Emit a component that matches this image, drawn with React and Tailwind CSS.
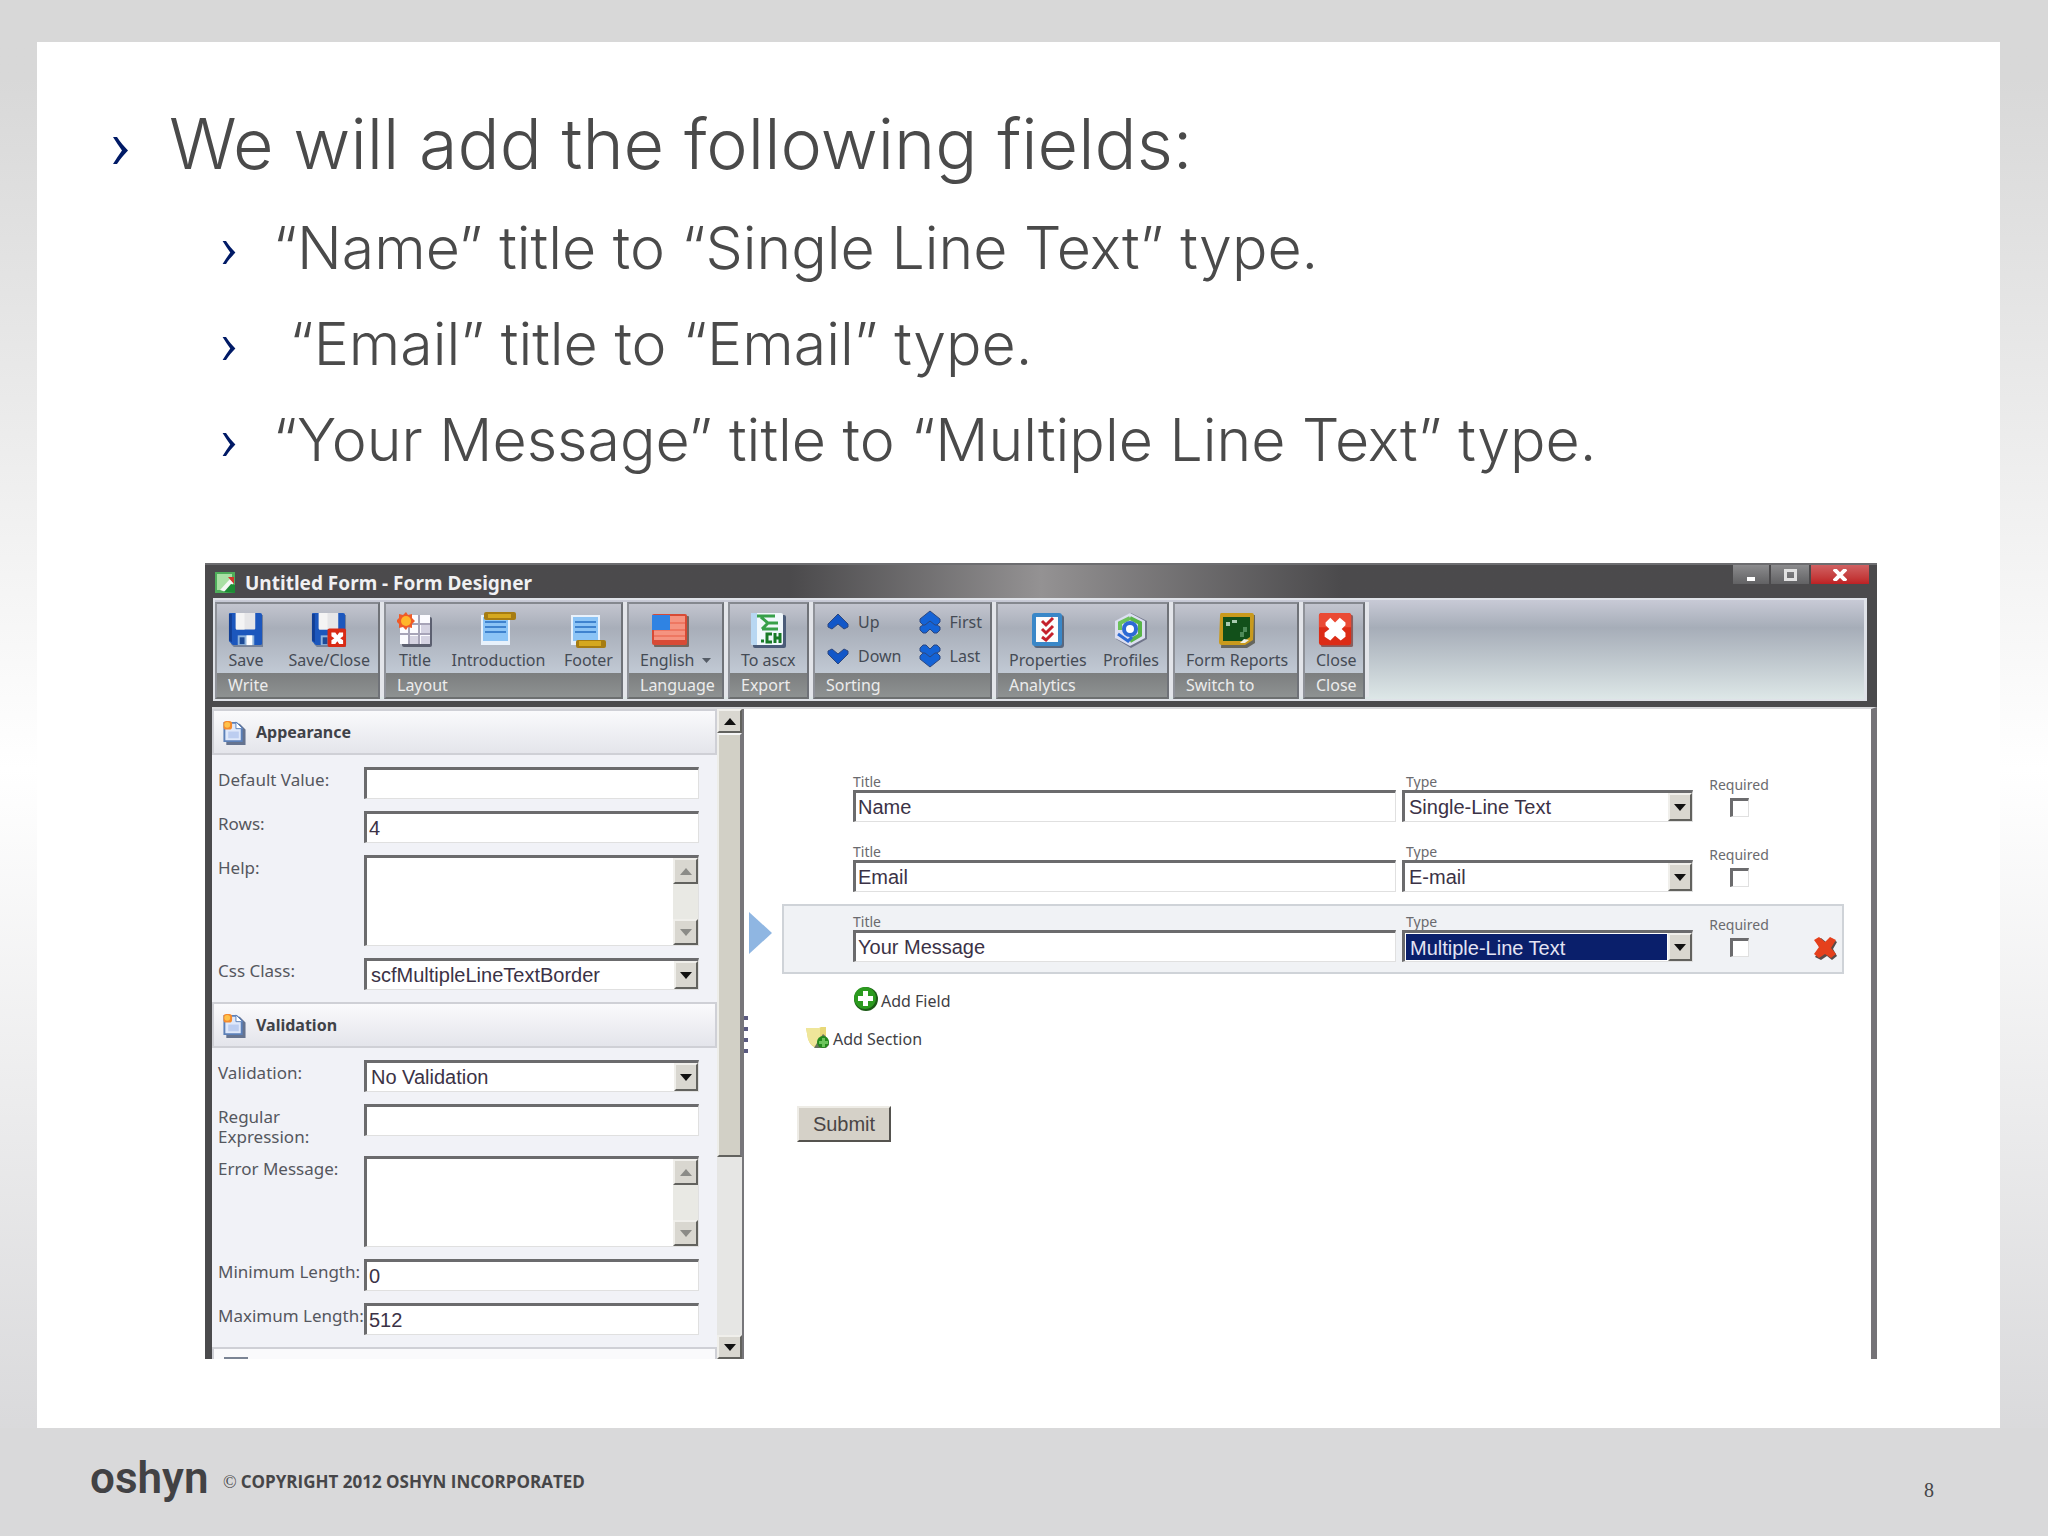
import React from "react";

const bullets = [
  "“Name” title to “Single Line Text” type.",
  "\u00a0“Email” title to “Email” type.",
  "“Your Message” title to “Multiple Line Text” type.",
];

function Chevron({ className }) {
  return (
    <svg viewBox="0 0 17 27" className={className} aria-hidden="true">
      <path d="M1 0 L5 0 C8 5 12 9 16 13.5 C12 18 8 22 5 27 L1 27 C4 22 7 18 10 13.5 C7 9 4 5 1 0Z" fill="#001a66" />
    </svg>
  );
}

function Floppy({ closing }) {
  return (
    <svg viewBox="0 0 37 37" className="h-9 w-9" aria-hidden="true">
      <path d="M3 3h33v33H6l-3-3z" fill="#5d6b86" opacity=".7" />
      <path d="M1 2q0-1 1-1h31q2 0 2 2v29q0 2-2 2H5l-4-4z" fill="#1c57bd" />
      <path d="M1 2h3v29l-3-2z" fill="#123f95" />
      <path d="M8 1h20v16q0 1-1 1H9q-1 0-1-1z" fill="#e6e6e8" />
      <path d="M8 1h9v17H9q-1 0-1-1z" fill="#f4f4f4" />
      <path d="M10 24h17v10H10z" fill="#8fb4dd" />
      <path d="M19 24h6v10h-6z" fill="#fff" />
      <path d="M12 26h5v7h-5z" fill="#1c4a96" />
      {closing && (
        <g>
          <rect x="17" y="17" width="19" height="19" rx="2" fill="#d92a14" />
          <path d="M21 21h4l2 3 2-3h4v4l-3 2 3 2v4h-4l-2-3-2 3h-4v-4l3-2-3-2z" fill="#fff" />
        </g>
      )}
    </svg>
  );
}

function TitleIcon() {
  return (
    <svg viewBox="0 0 36 36" className="h-9 w-9" aria-hidden="true">
      <rect x="5" y="5" width="30" height="30" rx="2" fill="#5c6070" />
      <rect x="3" y="3" width="30" height="29" fill="#fbfbff" />
      <path d="M12 3v29M22 3v29M3 12h30M3 22h30" stroke="#a7a4b8" strokeWidth="2" />
      <path d="M24 24h9v8h-9zM13 24h8v8h-8zM24 13h9v8h-9z" fill="#d5d3e2" />
      <path d="M9 0l2 3 4-1 0 4 3 3-3 3 0 4-4-1-2 3-3-3-4 1 0-4-3-3 3-3 0-4 4 1z" fill="#ef5a28" />
      <circle cx="9" cy="9" r="5" fill="#ffb52a" />
    </svg>
  );
}

function PageIcon({ footer }) {
  return (
    <svg viewBox="0 0 36 36" className="h-9 w-9" aria-hidden="true">
      <rect x="1" y="3" width="29" height="30" fill="#e8f1fb" />
      <rect x="3" y="5" width="25" height="24" fill="#8cc4f6" />
      <path d="M5 10h21M5 15h21M5 20h21" stroke="#3f83cf" strokeWidth="2" />
      {footer ? (
        <g>
          <rect x="6" y="28" width="30" height="8" rx="2" fill="#a67c12" />
          <rect x="9" y="29" width="22" height="5" fill="#d5a81f" />
        </g>
      ) : (
        <g>
          <rect x="4" y="0" width="32" height="8" rx="2" fill="#a67c12" />
          <rect x="8" y="2" width="23" height="4" fill="#d5a81f" />
        </g>
      )}
    </svg>
  );
}

function FlagIcon() {
  return (
    <svg viewBox="0 0 38 36" className="h-9 w-[38px]" aria-hidden="true">
      <rect x="3" y="4" width="35" height="31" rx="1" fill="#73675f" />
      <rect x="1" y="2" width="35" height="31" rx="2" fill="#d84a35" />
      <rect x="3" y="4" width="31" height="24" fill="#f59380" />
      <path d="M3 11h31M3 18h31M3 24h31" stroke="#ee7762" strokeWidth="2" />
      <rect x="1" y="3" width="18" height="15" fill="#2f83e3" />
    </svg>
  );
}

function AscxIcon() {
  return (
    <svg viewBox="0 0 36 36" className="h-9 w-9" aria-hidden="true">
      <rect x="3" y="3" width="33" height="33" rx="2" fill="#4a5b78" />
      <rect x="1" y="1" width="32" height="32" rx="2" fill="#f0f8fc" />
      <path d="M1 1h6v32H3q-2 0-2-2z" fill="#b8d7f2" />
      <path d="M7 4h18M11 5l7 6-6 6M18 11h10M12 17h16" stroke="#37a04a" strokeWidth="3" fill="none" />
      <path d="M11 29h3M22 22h-5v8h5M25 21v10M30 21v10M25 26h5" stroke="#177a26" strokeWidth="3" fill="none" />
    </svg>
  );
}

function SortArrow({ flip, twice }) {
  return (
    <svg viewBox="0 0 24 24" className={flip ? "h-6 w-6 rotate-180" : "h-6 w-6"} aria-hidden="true">
      {twice ? (
        <g fill="#1463d6" stroke="#2d477e" strokeWidth="1">
          <path d="M12 10l10 7v3l-3 3h-3l-4-4-4 4H5l-3-3v-3z" />
          <path d="M12 1l10 8v3l-3 3h-2l-5-4-5 4H5l-3-3V9z" />
        </g>
      ) : (
        <path d="M12 4l10 10v3l-4 2-6-5-6 5-4-2v-3z" fill="#1257c8" stroke="#2d477e" strokeWidth="1" />
      )}
    </svg>
  );
}

function PropertiesIcon() {
  return (
    <svg viewBox="0 0 34 36" className="h-9 w-[34px]" aria-hidden="true">
      <rect x="3" y="3" width="30" height="33" rx="3" fill="#58677e" />
      <rect x="1" y="1" width="30" height="33" rx="3" fill="#3987c8" />
      <rect x="5" y="5" width="22" height="25" fill="#fcfcfc" />
      <path d="M11 9l4 4 7-7M11 17l4 4 7-7M11 25l4 3 7-7" stroke="#c4202b" strokeWidth="3" fill="none" />
    </svg>
  );
}

function ProfilesIcon() {
  return (
    <svg viewBox="0 0 36 36" className="h-9 w-9" aria-hidden="true">
      <path d="M18 1l16 8v18l-16 9-15-9V9z" fill="#70758a" />
      <path d="M17 1l15 8v17l-15 8-15-8V9z" fill="#dcdff1" />
      <path d="M17 6l10 5v12l-10 6" stroke="#58b548" strokeWidth="4" fill="none" />
      <path d="M17 6L7 11v7" stroke="#6cc25a" strokeWidth="4" fill="none" />
      <path d="M5 22l10 7 4-4" stroke="#2d6ad4" strokeWidth="3" fill="none" />
      <circle cx="17" cy="17" r="6" fill="#fff" stroke="#2d6ad4" strokeWidth="4" />
    </svg>
  );
}

function ReportsIcon() {
  return (
    <svg viewBox="0 0 38 36" className="h-9 w-[38px]" aria-hidden="true">
      <path d="M5 3h32v28l-8 5H3z" fill="#66665e" />
      <path d="M3 1h31q2 0 2 3l-1 24-8 5H4q-3 0-3-3L2 4q0-3 1-3z" fill="#c99a1c" />
      <path d="M5 5h27v20l-6 4H5z" fill="#12501a" />
      <path d="M8 10h4v4H8zM14 8h5v3h-5z" fill="#a9cbb0" />
      <path d="M25 15h4v5h-3v5h-4v-5h3z" fill="#4d8a58" />
      <path d="M22 31l4-4 5 1-4 3z" fill="#f0efe3" />
    </svg>
  );
}

function CloseIcon() {
  return (
    <svg viewBox="0 0 38 38" className="h-9 w-9" aria-hidden="true">
      <rect x="3" y="3" width="34" height="34" rx="2" fill="#875f60" />
      <rect x="1" y="1" width="34" height="34" rx="3" fill="#dc2b16" />
      <path d="M1 4q0-3 3-3h28q3 0 3 3v12H1z" fill="#ea4a34" />
      <path d="M8 11l5-5 5 5 5-5 6 5v3l-4 4 4 4v4l-5 4-6-5-5 5-6-4v-4l5-4-4-4z" fill="#fff" />
    </svg>
  );
}

function SectionIcon() {
  return (
    <svg viewBox="0 0 24 26" className="h-[25px] w-6" aria-hidden="true">
      <path d="M4 4h14l6 6v16H4z" fill="#65738f" />
      <path d="M1 2h14l6 6v15H1z" fill="#5c80b8" />
      <path d="M3 4h11l5 5v12H3z" fill="#dfe8fa" />
      <path d="M14 2v7h7z" fill="#fff" stroke="#5c80b8" />
      <path d="M6 12h11v7H6z" fill="#bccdf0" />
      <rect x="1" y="1" width="9" height="9" rx="3" fill="#f58a2c" />
      <circle cx="5" cy="5" r="3" fill="#ffc14a" />
    </svg>
  );
}

function Tool({ icon, label, caret }) {
  return (
    <button type="button" className="flex flex-col items-center">
      <span className={caret ? "flex pr-3" : "flex"}>{icon}</span>
      <span className="flex items-center gap-2 whitespace-nowrap text-base leading-6 text-[#454b55]">
        {label}
        {caret && (
          <svg viewBox="0 0 9 5" className="h-[5px] w-[9px]" aria-hidden="true">
            <path d="M0 0h9L4.500 5z" fill="#555c66" />
          </svg>
        )}
      </span>
    </button>
  );
}

function Group({ name, className, children }) {
  return (
    <section aria-label={name} className={"flex flex-col border-r-4 border-[#e3e5ea] " + className}>
      <div className="flex flex-1 flex-col border-2 border-t-[#85888f] border-r-[#6f7278] border-b-[#6c6f70] border-l-[#8f9299]">
        <div className="flex h-[69px] items-start justify-between bg-linear-to-b from-[#c3c5cf] from-0% via-[#a8aeb9] via-35% to-[#c1c9d4] pt-2 pr-2 pl-[11px]">
          {children}
        </div>
        <div className="flex-1 bg-linear-to-b from-[#7c7e7f] to-[#8e9292] pl-[11px] text-base leading-6 text-[#ececec]">
          {name}
        </div>
      </div>
    </section>
  );
}

function SortButton({ label, flip, twice }) {
  return (
    <button type="button" className="flex h-5 items-center gap-2 text-base leading-5 text-[#454b55]">
      <SortArrow flip={flip} twice={twice} />
      {label}
    </button>
  );
}

function Triangle({ up, muted }) {
  return (
    <svg viewBox="0 0 12 7" className={up ? "h-[7px] w-3 rotate-180" : "h-[7px] w-3"} aria-hidden="true">
      <path d="M0 0h12L6 7z" fill={muted ? "#8b8b87" : "#111"} />
    </svg>
  );
}

const raised = "flex items-center justify-center bg-[#d9d7d0] border-2 border-t-[#f0efeb] border-l-[#f0efeb] border-r-[#62625e] border-b-[#62625e]";
const sunken = "border-t-[3px] border-l-[3px] border-r border-b border-t-[#6b6b6d] border-l-[#6b6b6d] border-r-[#e0e0e0] border-b-[#e0e0e0] bg-white";
const fieldFont = "font-['Liberation_Sans',Arial,sans-serif] text-xl";

function TextBox({ id, value }) {
  return <input id={id} type="text" defaultValue={value} className={`h-8 w-full min-w-0 pl-0.5 text-[#3b3246] outline-none ${sunken} ${fieldFont}`} />;
}

function SelectBox({ id, value, selected }) {
  return (
    <div className={`flex h-8 w-full ${sunken}`}>
      <select
        id={id}
        defaultValue={value}
        className={`min-w-0 flex-1 appearance-none pl-1 outline-none ${fieldFont} ${selected ? "m-px bg-[#0a1f6b] text-[#e4e4f4]" : "text-[#3b3246]"}`}
      >
        <option>{value}</option>
      </select>
      <span className={`w-6 ${raised}`}>
        <Triangle />
      </span>
    </div>
  );
}

function AreaBox({ id }) {
  return (
    <div className={`flex h-[91px] w-full ${sunken}`}>
      <textarea id={id} className="min-w-0 flex-1 resize-none outline-none" />
      <div className="flex w-[25px] flex-col justify-between bg-[#e9e9e4]">
        <span className={`h-[26px] ${raised}`}>
          <Triangle up muted />
        </span>
        <span className={`h-[26px] ${raised}`}>
          <Triangle muted />
        </span>
      </div>
    </div>
  );
}

function Row({ id, label, children, className = "" }) {
  return (
    <div className={`flex items-start ${className}`}>
      <label htmlFor={id} className="w-[146px] shrink-0 pt-[3px] text-[17px] leading-5 text-[#55575e]">
        {label}
      </label>
      <div className="flex min-w-0 flex-1">{children}</div>
    </div>
  );
}

function SectionHeader({ children }) {
  return (
    <h2 className="flex h-[46px] items-center gap-2.5 border-2 border-[#cfd0d6] bg-linear-to-b from-[#fafafc] to-[#e4e5eb] pl-2 text-base font-bold text-[#3f4248]">
      <SectionIcon />
      {children}
    </h2>
  );
}

function Sidebar() {
  return (
    <aside className="flex w-[530px] shrink-0 bg-[#f1f2f7]">
      <div className="flex min-w-0 flex-1 flex-col">
        <SectionHeader>Appearance</SectionHeader>
        <div className="flex flex-col gap-3 py-3 pr-[18px] pl-1.5">
          <Row id="default" label="Default Value:"><TextBox id="default" value="" /></Row>
          <Row id="rows" label="Rows:"><TextBox id="rows" value="4" /></Row>
          <Row id="help" label="Help:"><AreaBox id="help" /></Row>
          <Row id="css" label="Css Class:"><SelectBox id="css" value="scfMultipleLineTextBorder" /></Row>
        </div>
        <SectionHeader>Validation</SectionHeader>
        <div className="flex flex-col gap-3 py-3 pr-[18px] pl-1.5">
          <Row id="validation" label="Validation:"><SelectBox id="validation" value="No Validation" /></Row>
          <Row id="regex" label={<>Regular<br />Expression:</>} className="h-10"><TextBox id="regex" value="" /></Row>
          <Row id="error" label="Error Message:"><AreaBox id="error" /></Row>
          <Row id="min" label="Minimum Length:"><TextBox id="min" value="0" /></Row>
          <Row id="max" label="Maximum Length:"><TextBox id="max" value="512" /></Row>
        </div>
        <div className="flex h-3 items-end border-2 border-b-0 border-[#cfd0d6] bg-[#fafafc] pl-2.5">
          <span className="h-0.5 w-6 bg-[#7b8494]" />
        </div>
      </div>
      <div className="flex w-[25px] flex-col bg-[#e6e6e4]">
        <span className={`h-6 ${raised}`}><Triangle up /></span>
        <span className="h-[424px] border-2 border-t-[#f5f5f5] border-r-[#77767a] border-b-[#62625e] border-l-[#eeeeea] bg-[#d2d0c6]" />
        <span className={`mt-auto h-6 ${raised}`}><Triangle /></span>
      </div>
    </aside>
  );
}

const fields = [
  { id: "name", title: "Name", type: "Single-Line Text" },
  { id: "email", title: "Email", type: "E-mail" },
  { id: "message", title: "Your Message", type: "Multiple-Line Text", selected: true },
];

function FieldRow({ field }) {
  const on = field.selected;
  return (
    <div className="flex items-start">
      <div className="w-[34px] shrink-0 pt-2">
        {on && (
          <svg viewBox="0 0 24 42" className="h-[42px] w-6" aria-hidden="true">
            <path d="M1 0L24 21L1 42z" fill="#8fb6e2" />
          </svg>
        )}
      </div>
      <div className={`flex h-[70px] flex-1 items-start border-2 pt-2 pl-[69px] ${on ? "border-[#cfd3d8] bg-[#f0f2f5]" : "border-transparent"}`}>
        <div className="flex min-w-0 flex-1 flex-col">
          <label htmlFor={`${field.id}-title`} className="text-sm leading-4 text-[#6a6a6e]">Title</label>
          <TextBox id={`${field.id}-title`} value={field.title} />
        </div>
        <div className="ml-1.5 flex w-[291px] flex-col">
          <label htmlFor={`${field.id}-type`} className="pl-1 text-sm leading-4 text-[#6a6a6e]">Type</label>
          <SelectBox id={`${field.id}-type`} value={field.type} selected={on} />
        </div>
        <label className="ml-4 flex w-[60px] flex-col items-center gap-1 pt-0.5 text-sm leading-[18px] text-[#6a6a6e]">
          Required
          <input type="checkbox" className={`h-[19px] w-[19px] appearance-none ${sunken}`} />
        </label>
        <div className="flex w-[73px] justify-end pt-[22px] pr-1">
          {on && (
            <button type="button" aria-label="Delete field">
              <svg viewBox="0 0 25 25" className="h-[25px] w-[25px]" aria-hidden="true">
                <path d="M3 5l5-3 5 4 5-4 6 4-4 7 4 7-5 4-5-4-6 4-6-3 5-8z" fill="#594b48" />
                <path d="M1 4l5-3 6 5 5-5 6 3-5 8 5 6-5 4-6-4-6 4-5-4 5-7z" fill="#e5401c" />
              </svg>
            </button>
          )}
        </div>
      </div>
    </div>
  );
}

function Designer() {
  return (
    <main className="flex min-w-0 flex-1 flex-col bg-white pt-[55px] pr-[27px]">
      <form>
        {fields.map((f) => <FieldRow key={f.id} field={f} />)}
        <button type="button" className="mt-3 ml-[105px] flex items-end gap-[3px] text-base leading-5 text-[#3f3f45]">
          <svg viewBox="0 0 25 25" className="h-[25px] w-[25px]" aria-hidden="true">
            <circle cx="13" cy="13" r="12" fill="#1b5a16" />
            <circle cx="12" cy="12" r="11" fill="#2b9a1f" />
            <path d="M10 5h5v5h5v5h-5v5h-5v-5H5v-5h5z" fill="#fff" />
          </svg>
          Add Field
        </button>
        <button type="button" className="mt-4 ml-[57px] flex items-end gap-[3px] text-base leading-5 text-[#3f3f45]">
          <svg viewBox="0 0 25 22" className="h-[22px] w-[25px]" aria-hidden="true">
            <path d="M1 1h13l2-1h5v12l-6 8H9q-4-2-6-8z" fill="#e8d878" />
            <path d="M1 1h14v13l-5 5q-5-1-7-7z" fill="#efe69a" />
            <path d="M18 7q6 4 6 11l-3 3H9l3-5z" fill="#67755b" />
            <circle cx="18" cy="15" r="6" fill="#238a1c" />
            <path d="M17 11h3v3h3v3h-3v3h-3v-3h-3v-3h3z" fill="#6cc45c" />
          </svg>
          Add Section
        </button>
        <button
          type="submit"
          className="mt-[57px] ml-[49px] h-9 w-[94px] border-2 border-t-[#eeece6] border-r-[#55534f] border-b-[#55534f] border-l-[#eeece6] bg-[#d5d1c8] font-['Liberation_Sans',Arial,sans-serif] text-xl text-[#4a4546]"
        >
          Submit
        </button>
      </form>
    </main>
  );
}

function FormWindow() {
  return (
    <div className="mr-[123px] ml-[168px] overflow-hidden bg-[#4a4a4c] font-['Noto_Sans','Open_Sans',sans-serif]">
      <header className="flex h-[35px] items-start justify-between border-t-2 border-[#6d6d70] bg-linear-to-r from-[#4b4a4c] from-35% via-[#949293] via-50% to-[#4b4a4c] to-68% pl-2.5">
        <div className="flex items-center gap-2.5 pt-1">
          <svg viewBox="0 0 20 22" className="h-[22px] w-5" aria-hidden="true">
            <rect width="20" height="21" fill="#4fae5b" />
            <path d="M2 2h15v3L8 18H2z" fill="#a9e0a4" />
            <path d="M5 18l10-11 4 4-8 9z" fill="#f4f8f4" />
            <path d="M13 5h6v7z" fill="#d2362c" />
            <path d="M9 20l7-8 4 1v8z" fill="#1c8b34" />
          </svg>
          <h1 className="text-[19px] leading-7 font-bold text-[#f0f0f2]">Untitled Form - Form Designer</h1>
        </div>
        <div className="mr-2 flex">
          <button type="button" aria-label="Minimize" className="flex h-[19px] w-9 items-end justify-center bg-linear-to-b from-[#8c8c8e] to-[#626264] pb-[3px]">
            <span className="h-1 w-2 bg-white" />
          </button>
          <button type="button" aria-label="Maximize" className="ml-0.5 flex h-[19px] w-[38px] items-center justify-center bg-linear-to-b from-[#8c8c8e] to-[#626264]">
            <span className="h-3 w-[13px] border-[3px] border-[#e2e2e2]" />
          </button>
          <button type="button" aria-label="Close window" className="ml-0.5 flex h-[19px] w-[58px] items-center justify-center bg-linear-to-b from-[#d06062] to-[#bd2024]">
            <svg viewBox="0 0 14 12" className="h-3 w-3.5" aria-hidden="true">
              <path d="M1 0l12 12M13 0L1 12" stroke="#fff" strokeWidth="4" />
            </svg>
          </button>
        </div>
      </header>

      <div className="mr-[10px] ml-2 flex h-[103px] border-2 border-r-[3px] border-[#dfe2e8] bg-linear-to-b from-[#c8cad6] from-0% via-[#a6adb8] via-28% to-[#dde7e7] py-0.5">
        <Group name="Write" className="w-[169px]">
          <Tool icon={<Floppy />} label="Save" />
          <Tool icon={<Floppy closing />} label="Save/Close" />
        </Group>
        <Group name="Layout" className="w-[243px]">
          <Tool icon={<TitleIcon />} label="Title" />
          <Tool icon={<PageIcon />} label="Introduction" />
          <Tool icon={<PageIcon footer />} label="Footer" />
        </Group>
        <Group name="Language" className="w-[101px]">
          <Tool icon={<FlagIcon />} label="English" caret />
        </Group>
        <Group name="Export" className="w-[85px]">
          <Tool icon={<AscxIcon />} label="To ascx" />
        </Group>
        <Group name="Sorting" className="w-[183px]">
          <div className="flex flex-col items-start gap-3.5">
            <SortButton label="Up" />
            <SortButton label="Down" flip />
          </div>
          <div className="flex flex-col items-start gap-3.5">
            <SortButton label="First" twice />
            <SortButton label="Last" twice flip />
          </div>
        </Group>
        <Group name="Analytics" className="w-[177px]">
          <Tool icon={<PropertiesIcon />} label="Properties" />
          <Tool icon={<ProfilesIcon />} label="Profiles" />
        </Group>
        <Group name="Switch to" className="w-[130px]">
          <Tool icon={<ReportsIcon />} label="Form Reports" />
        </Group>
        <Group name="Close" className="w-[66px]">
          <Tool icon={<CloseIcon />} label="Close" />
        </Group>
      </div>

      <div className="mt-1.5 ml-[7px] flex border-t-2 border-r-[6px] border-t-[#d9dadd] border-r-[#757377]">
        <Sidebar />
        <div className="flex w-1.5 flex-col justify-center gap-[7px] border-l-2 border-[#77767a] bg-white">
          <span className="h-1 w-1 bg-[#5a5a80]" />
          <span className="h-1 w-1 bg-[#5a5a80]" />
          <span className="h-1 w-1 bg-[#5a5a80]" />
          <span className="h-1 w-1 bg-[#5a5a80]" />
        </div>
        <Designer />
      </div>
    </div>
  );
}

export default function App() {
  return (
    <div className="flex min-h-screen flex-col bg-linear-to-b from-[#d8d8d8] from-5% via-white via-50% to-[#d8d8da] to-95%">
      <div className="h-[42px] bg-[#d8d8d8]" />
      <article className="mr-12 ml-[37px] flex-1 bg-white pt-[62px] pb-14">
        <div className="font-['Century_Gothic','URW_Gothic',Inter,sans-serif] font-light text-[#4a4a4a]">
          <h1 className="flex items-center pl-[75px] text-[70px] leading-[80px]">
            <Chevron className="mt-3 mr-10 h-[27px] w-[17px]" />
            We will add the following fields:
          </h1>
          <ul className="mt-4">
            {bullets.map((b) => (
              <li key={b} className="flex items-center pl-[184px] text-[59px] leading-[96px]">
                <Chevron className="mt-2 mr-9 h-[23px] w-4" />
                {b}
              </li>
            ))}
          </ul>
        </div>
        <div className="h-[75px]" />
        <FormWindow />
      </article>
      <footer className="flex h-[108px] items-center bg-[#d9d9da] pr-[114px] pl-[90px] text-[#464648]">
        <span className="w-[133px] pb-2 font-[Roboto,sans-serif] text-[44px] font-semibold text-[#424244]">oshyn</span>
        <span className="font-['Liberation_Serif',serif] text-lg">©</span>
        <span className="ml-1 font-['Open_Sans',sans-serif] text-[17px] font-bold">COPYRIGHT 2012 OSHYN INCORPORATED</span>
        <span className="ml-auto pt-4 font-['Liberation_Serif',serif] text-xl">8</span>
      </footer>
    </div>
  );
}
